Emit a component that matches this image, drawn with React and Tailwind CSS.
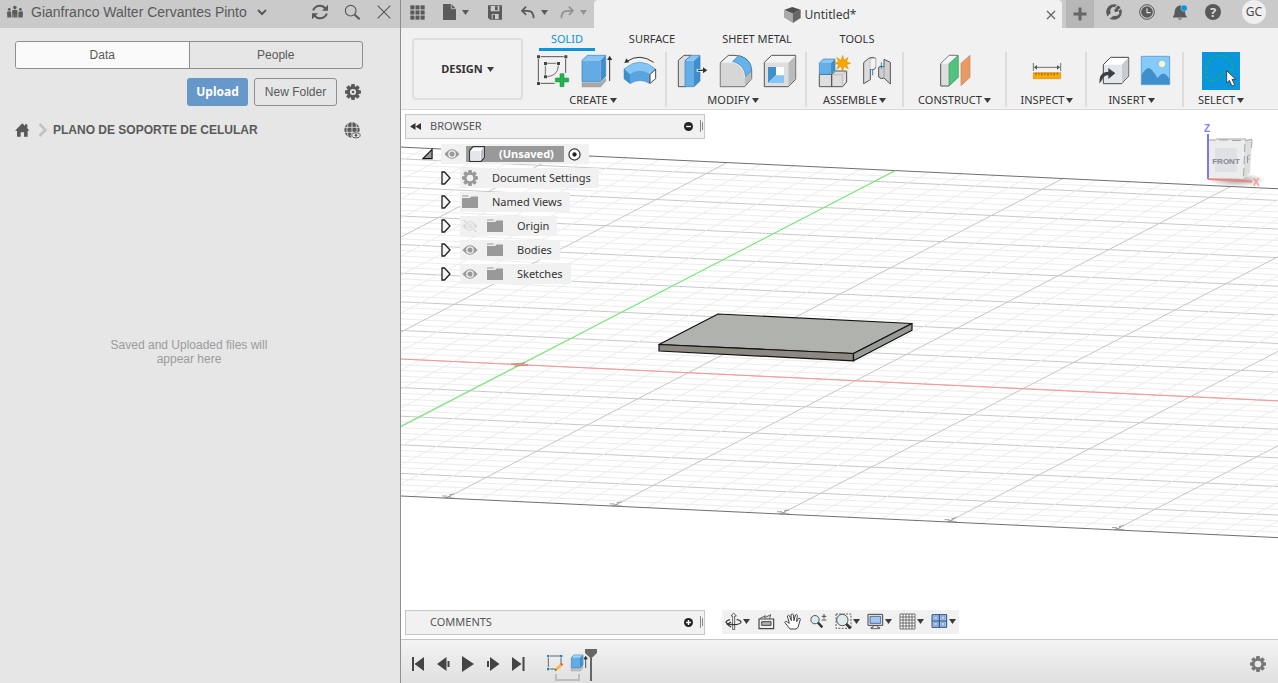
import React from "react";

const range = (from, to) => Array.from({ length: to - from + 1 }, (_, i) => from + i);

/* ---------- small shared pieces ---------- */

function Caret({ className = "text-[#3c3c3c]" }) {
  return (
    <svg width="7" height="5" viewBox="0 0 7 5" className={className} aria-hidden="true">
      <path d="M0 0h7L3.500 5z" fill="currentColor" />
    </svg>
  );
}

function Icon({ box, w, h, children, className = "" }) {
  return (
    <svg width={w} height={h} viewBox={box} className={"block shrink-0 " + className} aria-hidden="true">
      {children}
    </svg>
  );
}

function IconButton({ label, children, className = "" }) {
  return (
    <button type="button" aria-label={label} className={"flex items-center justify-center " + className}>
      {children}
    </button>
  );
}

function Gear({ size, teeth = 8, color, hole = 4, dot = false }) {
  return (
    <svg width={size} height={size} viewBox="-12 -12 24 24" className="block" aria-hidden="true">
      {range(0, teeth - 1).map((i) => (
        <path key={i} d="M-2.4 -12h4.8l.8 5h-6.4z" fill={color} transform={`rotate(${(360 / teeth) * i})`} />
      ))}
      <circle r={(8.6 + hole) / 2} fill="none" stroke={color} strokeWidth={8.6 - hole} />
      {dot && <circle r="2" fill={color} />}
    </svg>
  );
}

/* ---------- data panel ---------- */

function DataPanel() {
  return (
    <aside className="flex w-[401px] shrink-0 flex-col border-r border-[#8f8f8f] bg-[#e6e6e6] font-['Liberation_Sans',Arial,sans-serif] text-[#595959]">
      <header className="flex h-7 items-center bg-[#cacaca] pl-[7px] pr-2 pb-1">
        <button type="button" className="flex items-center">
          <Icon box="21 13 49 42" w={16} h={14}>
            <g fill="#5c5c5c">
              <circle cx="45" cy="20" r="5.5" />
              <circle cx="28" cy="26" r="4.5" />
              <circle cx="62" cy="26" r="4.5" />
              <path d="M37 29q8-4 16 0v22h-4v-9h-1v9h-6v-9h-1v9h-4z" />
              <path d="M21 33q7-3 13 0v18H22z M56 33q7-3 14 0l-1 18H56z" />
            </g>
          </Icon>
          <span className="ml-2 text-[14px] leading-5">Gianfranco Walter Cervantes Pinto</span>
          <Icon box="0 0 10 7" w={10} h={7} className="ml-[10px]">
            <path d="M1 1l4 4 4-4" fill="none" stroke="#595959" strokeWidth="2" />
          </Icon>
        </button>
        <div className="ml-auto flex items-center gap-[15px]">
          <IconButton label="Refresh">
            <Icon box="933 12 54 48" w={18} h={16}>
              <g fill="none" stroke="#595959" strokeWidth="6">
                <path d="M939 31q7-14 21-14 10 0 17 9" />
                <path d="M981 41q-7 14-21 14-10 0-17-9" />
              </g>
              <path d="M984 14v18h-18z M936 58V40h18z" fill="#595959" />
            </Icon>
          </IconButton>
          <IconButton label="Search">
            <Icon box="1029 10 51 51" w={17} h={17}>
              <circle cx="1049" cy="30" r="16" fill="none" stroke="#595959" strokeWidth="3.5" />
              <path d="M1061 42l15 14" stroke="#595959" strokeWidth="6" />
            </Icon>
          </IconButton>
          <IconButton label="Close data panel">
            <Icon box="0 0 14 14" w={16} h={16}>
              <path d="M1.5 1.5l11 11M12.5 1.5l-11 11" stroke="#595959" strokeWidth="1" />
            </Icon>
          </IconButton>
        </div>
      </header>

      <div className="flex flex-col pl-[15px] pr-[37px] pt-[13px]">
        <div className="flex h-7 overflow-hidden rounded-[3px] border border-[#8f8f8f] text-[12px]">
          <button type="button" className="flex-1 border-r border-[#8f8f8f] bg-[#fafafa]">Data</button>
          <button type="button" className="flex-1">People</button>
        </div>
        <div className="mt-[9px] flex h-7 items-center justify-end pr-0.5">
          <button type="button" className="h-7 w-[61px] rounded-[3px] bg-[#6699c9] font-['Noto_Sans',sans-serif] text-[12px] font-bold text-white">
            Upload
          </button>
          <button type="button" className="ml-1.5 h-7 w-[83px] rounded-[3px] border border-[#8f8f8f] text-[12px]">
            New Folder
          </button>
          <IconButton label="Settings" className="ml-2">
            <Gear size={16} color="#595959" hole={4.6} dot />
          </IconButton>
        </div>
        <nav className="mt-[10px] flex h-7 items-center pr-0.5">
          <IconButton label="Home">
            <Icon box="47 370 45 42" w={15} h={14}>
              <path d="M69 371l8 8v-5h7v12l6 7h-5v18H74v-13H64v13H53v-18h-6z" fill="#595959" />
            </Icon>
          </IconButton>
          <Icon box="0 0 9 14" w={9} h={14} className="ml-2">
            <path d="M1.5 1l6 6-6 6" fill="none" stroke="#c2c2c2" strokeWidth="2.6" />
          </Icon>
          <a href="#project" className="ml-1.5 text-[12px] font-bold">PLANO DE SOPORTE DE CELULAR</a>
          <IconButton label="Open on the web" className="ml-auto">
            <Icon box="1033 365 51 51" w={17} h={17}>
              <circle cx="1057" cy="389" r="23" fill="#595959" />
              <path d="M1033 381h48M1033 396h48M1057 365v48M1046 366q-9 22 0 46M1068 366q9 22 0 46" fill="none" stroke="#e6e6e6" strokeWidth="2.5" />
              <ellipse cx="1069" cy="405" rx="16" ry="11" fill="#e6e6e6" />
              <ellipse cx="1069" cy="405" rx="12.5" ry="7.5" fill="none" stroke="#595959" strokeWidth="3" />
              <circle cx="1069" cy="405" r="4" fill="#595959" />
            </Icon>
          </IconButton>
        </nav>
      </div>
      <p className="ml-[15px] mt-[194px] w-[348px] px-[88px] text-center text-[12px] leading-[14px] text-[#9b9b9b]">
        Saved and Uploaded files will appear here
      </p>
    </aside>
  );
}

/* ---------- title bar ---------- */

function TitleBar() {
  return (
    <header className="flex h-7 shrink-0 bg-[#cacaca] text-[#5a5a5a]">
      <div className="flex w-[193px] items-center pb-1 pl-[9px]">
        <IconButton label="Show data panel">
          <Icon box="29 14 44 44" w={15} h={15}>
            {range(0, 8).map((i) => (
              <rect key={i} x={30 + (i % 3) * 15} y={15 + Math.floor(i / 3) * 15} width="12" height="12" fill="#5a5a5a" />
            ))}
          </Icon>
        </IconButton>
        <IconButton label="File" className="ml-[18px] gap-1.5">
          <Icon box="129 12 39 48" w={13} h={16}>
            <path d="M129 12h25l14 14v34h-39z" fill="#5a5a5a" />
            <path d="M154 12v14h14" fill="none" stroke="#cacaca" strokeWidth="2.5" />
          </Icon>
          <Caret className="text-[#5a5a5a]" />
        </IconButton>
        <IconButton label="Save" className="ml-[19px]">
          <Icon box="264 14 42 43" w={14} h={15}>
            <path d="M264 14h42v43h-36l-6-6z" fill="#5a5a5a" />
            <path d="M272 16h26v16h-26z M275 40h21v15h-21z" fill="#cacaca" />
            <path d="M285 17h8v12h-8z M278 42h7v13h-7z" fill="#5a5a5a" />
          </Icon>
        </IconButton>
        <IconButton label="Undo" className="ml-[19px] gap-1.5">
          <Icon box="363 18 41 38" w={14} h={13}>
            <path d="M378 20l-12 12 12 12M367 32h16q17 0 17 22" fill="none" stroke="#5a5a5a" strokeWidth="5" />
          </Icon>
          <Caret className="text-[#5a5a5a]" />
        </IconButton>
        <IconButton label="Redo" className="ml-3 gap-1.5">
          <Icon box="363 18 41 38" w={14} h={13} className="-scale-x-100">
            <path d="M378 20l-12 12 12 12M367 32h16q17 0 17 22" fill="none" stroke="#939393" strokeWidth="5" />
          </Icon>
          <Caret className="text-[#939393]" />
        </IconButton>
      </div>

      <div className="flex flex-1 items-center rounded-t-[4px] bg-[#f1f1f1] pr-1.5 pt-px">
        <div className="flex flex-1 items-center justify-center gap-1">
          <Icon box="374 18 50 47" w={17} h={16}>
            <path d="M374 28l26 9v28l-26-16z" fill="#a9a9a9" />
            <path d="M423 26l-23 11v28l23-15z" fill="#666" />
            <path d="M374 27l24-9 25 8-23 11z" fill="#4f4f4f" />
          </Icon>
          <span className="text-[12px] leading-4 text-[#3c3c3c]">Untitled*</span>
        </div>
        <IconButton label="Close tab">
          <Icon box="0 0 10 10" w={10} h={10}>
            <path d="M1 1l8 8M9 1L1 9" stroke="#666" strokeWidth="1.3" />
          </Icon>
        </IconButton>
      </div>

      <div className="flex items-center pr-3">
        <IconButton label="New tab" className="ml-1 h-7 w-7 bg-[#b7b7b7]">
          <Icon box="0 0 14 14" w={14} h={14}>
            <path d="M7 .5v13M.5 7h13" stroke="#666" strokeWidth="3" />
          </Icon>
        </IconButton>
        <div className="ml-3 flex items-center gap-[17px] pb-1">
          <IconButton label="Extensions">
            <Icon box="438 12 48 48" w={16} h={16}>
              <circle cx="462" cy="36" r="23.5" fill="#595959" />
              <path d="M441 51l11-12q-5-13 8-19l9 3-7 8 4 6 11-4 1 8q-6 9-17 6l-12 9z" fill="#cacaca" />
              <path d="M466 22l7-7M475 31l8-6" stroke="#cacaca" strokeWidth="3.500" />
            </Icon>
          </IconButton>
          <IconButton label="Job status">
            <Icon box="537 12 48 48" w={16} h={16}>
              <circle cx="561" cy="36" r="22" fill="#cacaca" stroke="#595959" strokeWidth="3" />
              <circle cx="561" cy="36" r="17.5" fill="#595959" />
              <path d="M561 25v13h11" fill="none" stroke="#dedede" strokeWidth="3.5" />
            </Icon>
          </IconButton>
          <IconButton label="Notifications">
            <Icon box="637 10 48 50" w={16} h={17}>
              <path d="M658 15q3-4 6 0 11 4 12 18 0 10 5 14v3h-41v-3q5-4 5-14 1-14 13-18z" fill="#595959" />
              <path d="M654 53h13q-6 8-13 0z" fill="#595959" />
              <circle cx="673" cy="22" r="9.5" fill="#0a95dc" stroke="#cacaca" strokeWidth="1.5" />
            </Icon>
          </IconButton>
          <IconButton label="Help" className="size-4 rounded-full bg-[#595959] text-[13px] font-bold leading-4 text-[#dcdcdc]">
            ?
          </IconButton>
          <button type="button" className="ml-1 size-6 rounded-full bg-[#efefef] text-[12px] leading-6 text-[#4a4a4a]">
            GC
          </button>
        </div>
      </div>
    </header>
  );
}

/* ---------- ribbon ---------- */

const sketchIcon = (
  <Icon key="sketch" box="414 159 102 108" w={34} h={36}>
    <path d="M425 170h69M425 250h42M418 177v67M500 177v42" stroke="#555" strokeWidth="3" fill="none" />
    <path d="M439 197v27M445 190h27M478 197q-1 30-33 33" stroke="#555" strokeWidth="2.5" fill="none" />
    <g fill="#444">
      <path d="M414 166h9v9h-9z M496 166h9v9h-9z M414 246h9v9h-9z M435 186h9v9h-9z M474 186h9v9h-9z M435 226h9v9h-9z" />
    </g>
    <path d="M483 221h12v13h14v12h-14v14h-12v-14h-14v-12h14z" fill="#25b14f" stroke="#17913d" strokeWidth="1.5" />
  </Icon>
);

const extrudeIcon = (
  <Icon key="extrude" box="543 159 96 108" w={32} h={36}>
    <path d="M546 248h56l15-14v10l-15 17h-56z" fill="#a8a8a8" stroke="#8c8c8c" />
    <path d="M546 181h56v64h-56z" fill="#62abe4" />
    <path d="M546 181l16-15h55l-15 15z" fill="#84c6f7" />
    <path d="M602 181l15-15v63l-15 16z" fill="#3f8fcb" />
    <path d="M546 181l16-15h55v63l-15 16h-56z" fill="none" stroke="#3580b8" strokeWidth="2" />
    <path d="M629 243v-66" stroke="#333" strokeWidth="3" />
    <path d="M621 180l8-13 8 13z" fill="#333" />
  </Icon>
);

const revolveIcon = (
  <Icon key="revolve" box="669 159 102 108" w={34} h={36}>
    <path d="M672 207q47-41 95 0l-17 17q-31-21-60 0z" fill="#84c6f7" />
    <path d="M672 207l18 17v27l-18-15z" fill="#3f8fcb" />
    <path d="M690 224q29-21 60 0v27q-30-19-60 0z" fill="#5aa5e0" />
    <path d="M672 207q47-41 95 0l-17 17q-31-21-60 0zM672 207v29l18 15q30-19 60 0" fill="none" stroke="#3580b8" strokeWidth="1.5" />
    <path d="M750 224l17-17v29l-17 14z" fill="#fff" stroke="#444" strokeWidth="3" />
    <path d="M681 184q38-26 80 3" fill="none" stroke="#333" strokeWidth="3" />
    <path d="M673 189l6-14 9 12z" fill="#333" />
  </Icon>
);

const pressPullIcon = (
  <Icon key="press pull" box="54 159 96 108" w={32} h={36}>
    <path d="M58 181l17-15h22l-17 15v79H58z" fill="#ddd" stroke="#555" strokeWidth="3" strokeLinejoin="round" />
    <path d="M78 182h27v78H78z" fill="#66aee6" />
    <path d="M78 182l18-16h27l-18 16z" fill="#84c6f7" />
    <path d="M105 182l18-16v77l-18 17z" fill="#3f8fcb" />
    <path d="M78 182l18-16h27v77l-18 17H78z" fill="none" stroke="#3580b8" strokeWidth="2" />
    <path d="M113 211h24" stroke="#fff" strokeWidth="8" />
    <path d="M116 211h20" stroke="#333" strokeWidth="4" />
    <path d="M132 202l13 9-13 9z" fill="#333" />
  </Icon>
);

const filletIcon = (
  <Icon key="fillet" box="180 159 102 108" w={34} h={36}>
    <path d="M184 188l24-22h17q48 0 53 45v25l-21 24h-73z" fill="#f2f2f2" stroke="#555" strokeWidth="3" strokeLinejoin="round" />
    <path d="M185 188h37q33 10 35 45v26h-72z" fill="#d6d6d6" />
    <path d="M257 233l20-22v25l-20 23z" fill="#bcbcbc" />
    <path d="M221 184l18-17q38 9 39 44l-18 19q-3-36-39-46z" fill="#66b2ea" stroke="#3580b8" strokeWidth="2" />
  </Icon>
);

const shellIcon = (
  <Icon key="shell" box="309 159 102 108" w={34} h={36}>
    <path d="M313 187l22-21h72v72l-22 22h-72z" fill="#f4f4f4" stroke="#555" strokeWidth="3" strokeLinejoin="round" />
    <path d="M315 188h69v70h-69z" fill="#dedede" />
    <path d="M385 188l21-20v70l-21 21z" fill="#bbb" />
    <path d="M324 201h48v48h-48z" fill="#fff" />
    <path d="M324 201h24v25l-24 23z" fill="#3f8fcb" />
    <path d="M348 226l-24 23h48v-23z" fill="#84c6f7" />
  </Icon>
);

const componentIcon = (
  <Icon key="component" box="471 159 102 108" w={34} h={36}>
    <path d="M475 223h37v37h-37z M512 223l12-10h33v33l-12 14h-33z" fill="#dedede" stroke="#555" strokeWidth="3" strokeLinejoin="round" />
    <path d="M513 224h31v35M545 223l12-10" fill="none" stroke="#aaa" strokeWidth="2" />
    <path d="M475 189h35v34h-35z" fill="#66aee6" />
    <path d="M475 189l12-12h35l-12 12z" fill="#84c6f7" />
    <path d="M510 189l12-12v34l-12 12z" fill="#3f8fcb" />
    <path d="M475 189l12-12h35v34l-12 12h-35z" fill="none" stroke="#3580b8" strokeWidth="2" />
    <path d="M545 166l4 15 12-9-4 13 12 5-12 4 5 13-13-8-4 15-5-15-13 9 6-14-13-4 13-5-6-13 13 9z" fill="#f7a600" stroke="#dd8a00" strokeWidth="1.5" />
  </Icon>
);

const jointIcon = (
  <Icon key="joint" box="606 159 90 108" w={30} h={36}>
    <path d="M611 188l15-13q10-6 21 0v26q0 10-16 6v32l-20 12z" fill="#dcdcdc" stroke="#555" strokeWidth="3" strokeLinejoin="round" />
    <path d="M631 207v-27l16-5" fill="none" stroke="#777" strokeWidth="2" />
    <path d="M631 180q8-5 16-4v25q-6 8-16 6z" fill="#f4f4f4" />
    <path d="M691 187l-19-9v23q-10-5-16 1v29q7 8 16 3l19 18z" fill="#cfcfcf" stroke="#555" strokeWidth="3" strokeLinejoin="round" />
    <path d="M672 201v31" stroke="#888" strokeWidth="2" />
    <path d="M638 208v18M664 187v19" stroke="#1a86d8" strokeWidth="3" />
  </Icon>
);

const planeIcon = (
  <Icon key="plane" box="840 159 96 108" w={32} h={36}>
    <path d="M845 191l26-25h24v67l-25 25h-25z" fill="#ddd" stroke="#555" strokeWidth="3" strokeLinejoin="round" />
    <path d="M846 191l25-24h23l-24 24z" fill="#f6f6f6" />
    <path d="M870 191l28-25v66l-28 26z" fill="#53c27f" stroke="#2ca35c" strokeWidth="2" />
    <path d="M906 190l27-24v66l-27 25z" fill="#e99b66" stroke="#d07f48" strokeWidth="2" />
  </Icon>
);

const measureIcon = (
  <Icon key="measure" box="216 159 90 108" w={30} h={36}>
    <path d="M220 189v24M302 189v24M224 202h74" stroke="#555" strokeWidth="2.5" />
    <path d="M222 202l9-7v14z M300 202l-9-7v14z" fill="#555" />
    <path d="M220 218h82v18h-82z" fill="#f9a90c" stroke="#d98c00" strokeWidth="2" />
    <path d="M228 219v7M237 219v5M246 219v7M255 219v5M264 219v7M273 219v5M282 219v7M292 219v5" stroke="#6b4a00" strokeWidth="2.5" />
  </Icon>
);

const insertIcon = (
  <Icon key="derive" box="414 159 96 108" w={32} h={36}>
    <path d="M430 194l22-22h54v56l-21 23h-55z" fill="#fff" stroke="#444" strokeWidth="3" strokeLinejoin="round" />
    <path d="M432 194h52v55h-52z" fill="#e3e6ea" />
    <path d="M485 194l20-21v55l-20 22z" fill="#c6cbd2" />
    <path d="M419 236q4-21 26-21v-11l21 16-21 17v-11q-13-1-19 14l-8 11z" fill="#3c3f44" />
  </Icon>
);

const decalIcon = (
  <Icon key="decal" box="543 159 93 108" w={31} h={36}>
    <path d="M547 169h85v85h-85z" fill="#84cbfb" stroke="#3b8ccb" strokeWidth="2" />
    <path d="M548 224q16-26 26-18 8 6 22 28 10-14 18-13 7 0 17 15v17h-83z" fill="#3f8fcb" />
    <circle cx="609" cy="192" r="9" fill="#fff7c8" stroke="#ffeea0" />
  </Icon>
);

const selectIcon = (
  <Icon key="lasso" box="726 156 114 114" w={38} h={38}>
    <path d="M726 156h114v114H726z" fill="#0a95dc" />
    <path d="M745 190q12-25 40-23 32 4 33 34-2 18-18 19-14-2-22 6-6 14-20 16-18-1-20-22 0-16 7-30z" fill="none" stroke="#23b84d" strokeWidth="3.500" strokeDasharray="9 6" />
    <path d="M800 212v37l8-8 8 17 8-4-8-16h11z" fill="#fff" stroke="#333" strokeWidth="2.5" />
  </Icon>
);

const groups = [
  { name: "CREATE", width: "w-[138px]", shift: "pr-2", icons: [sketchIcon, extrudeIcon, revolveIcon] },
  { name: "MODIFY", width: "w-[140px] pl-0.5", shift: "pr-2", icons: [pressPullIcon, filletIcon, shellIcon] },
  { name: "ASSEMBLE", width: "w-[97px]", shift: "", icons: [componentIcon, jointIcon] },
  { name: "CONSTRUCT", width: "w-[103px]", shift: "", icons: [planeIcon] },
  { name: "INSPECT", width: "w-[80px] pl-0.5", shift: "", icons: [measureIcon] },
  { name: "INSERT", width: "w-[97px]", shift: "pr-1.5", icons: [insertIcon, decalIcon] },
  { name: "SELECT", width: "w-[74px]", shift: "", icons: [selectIcon] },
];

function Ribbon() {
  return (
    <div className="flex h-[82px] shrink-0 border-b border-[#d6d6d6] bg-[#f1f1f1] pl-[11px] text-[11px] text-[#333]">
      <button type="button" className="mr-1.5 mt-[10px] flex h-[62px] w-[111px] shrink-0 items-center justify-center gap-1 rounded-[4px] border-2 border-[#dedede] font-bold">
        DESIGN <Caret />
      </button>
      <div className="flex flex-col">
        <div className="mb-px flex h-[23px] gap-7 pl-[10px]">
          <button type="button" className="w-14 border-b-[3px] border-[#0a95dc] pt-0.5 text-[#0a95dc]">SOLID</button>
          <button type="button" className="w-[58px] pb-px">SURFACE</button>
          <button type="button" className="w-24 pb-px">SHEET METAL</button>
          <button type="button" className="w-12 pb-px">TOOLS</button>
        </div>
        <div className="flex">
          {groups.map((g, i) => (
            <div
              key={g.name}
              className={
                "flex h-[55px] shrink-0 flex-col items-center " +
                g.width +
                (i < groups.length - 1 ? " border-r-2 border-[#dcdcdc]" : "")
              }
            >
              <div className="flex h-[38px] shrink-0 items-center gap-[10px]">
                {g.icons.map((ic) => (
                  <IconButton key={ic.key} label={g.name + " " + ic.key}>{ic}</IconButton>
                ))}
              </div>
              <button type="button" className={"mt-[3px] flex shrink-0 items-center gap-0.5 leading-[14px] " + g.shift}>
                {g.name} <Caret />
              </button>
            </div>
          ))}
        </div>
      </div>
    </div>
  );
}

/* ---------- canvas scene ---------- */

const topY = (x) => 147.1 + 0.0475 * (x - 401);
const bottomY = (x) => 496 + 0.0475 * (x - 401);

function Scene() {
  return (
    <svg className="absolute inset-0 h-full w-full" aria-hidden="true">
      <g transform="translate(-401 -110)" fill="none">
        {range(-36, 23).map((i) => {
          const y = 359 + i * 5.72;
          return <path key={"h" + i} d={`M401 ${y}L2401 ${y + 95}`} stroke={i % 5 ? "#ececec" : "#c8c8c8"} />;
        })}
        {range(-15, 60).map((j) => {
          const b = 279 + 33.44 * j;
          const t = 895 + 33.56 * j;
          return <path key={"d" + j} d={`M${b} ${bottomY(b)}L${t} ${topY(t)}`} stroke={j % 5 ? "#ececec" : "#c6c6c6"} />;
        })}
        <path d="M401 147.1L2401 242.1M401 496L2401 591" stroke="#6f6f6f" />
        <path d="M401 359L2401 454.8" stroke="#ff9494" />
        <path d="M401 426L895.4 170.7" stroke="#66f566" />
        <path d="M511 364l14-1M514 366l14-1" stroke="#c06060" strokeWidth="0.8" />
        {range(0, 4).map((k) => (
          <path key={k} d="M0 0l7-2M2 0h8M-2 -2h5M5 -3l5-1" stroke="#888" strokeWidth="0.8" transform={`translate(${444 + 167.5 * k} ${498 + 7.9 * k})`} />
        ))}
        <g stroke="#111" strokeWidth="1.2" strokeLinejoin="round">
          <path d="M659 344.5L718 314l194 9.500-58.500 30z" fill="#b0b3ad" />
          <path d="M659 344.500l194.500 9v7.300L659 351z" fill="#8d8882" />
          <path d="M853.500 353.500l58.500-30v6.800l-58.500 30.500z" fill="#989b95" />
        </g>
      </g>
    </svg>
  );
}

function ViewCube() {
  return (
    <svg width="66" height="74" viewBox="0 0 66 74" className="absolute right-1.5 top-2.5 overflow-visible font-['Liberation_Sans',Arial,sans-serif]" aria-label="View cube">
      <defs>
        <radialGradient id="shade">
          <stop offset="0" stopColor="#555" stopOpacity=".55" />
          <stop offset="1" stopColor="#555" stopOpacity="0" />
        </radialGradient>
      </defs>
      <ellipse cx="31" cy="60" rx="29" ry="7" fill="url(#shade)" />
      <path d="M3 20l7-1h36l-7 2-2 38L3 57z" fill="#ececec" />
      <path d="M39 21l7-2-2 34-7 6z" fill="#dddee0" />
      <path d="M9 28h22v24H9z" fill="#dfe1e4" />
      <path d="M3 20h7M13 20h9M26 20.500h9M10 19h30M39 21l7-2M39 24l-.5 8M38.500 36l-.5 8M38 48l-.5 8M46 20l-.5 8" stroke="#a6a6a6" strokeWidth="1" />
      <text x="20" y="44" textAnchor="middle" fontSize="8" fontWeight="bold" fill="#85898e">
        FRONT
      </text>
      <path d="M41.500 36v7M41.500 36l2-.5M41.500 39h2" stroke="#95999e" strokeWidth="1" />
      <path d="M2 14v45" stroke="#7a7af0" strokeWidth="2" />
      <path d="M2 59l44 2.500" stroke="#ee8484" strokeWidth="2" />
      <text x="-2" y="12" fontSize="10" fontWeight="bold" fill="#8484f2">Z</text>
      <text x="47" y="66" fontSize="10" fontWeight="bold" fill="#f39a9a">X</text>
    </svg>
  );
}

/* ---------- browser tree ---------- */

function Eye({ hidden }) {
  const color = hidden ? "#d9d9d9" : "#999";
  return (
    <Icon box="0 0 16 12" w={16} h={12}>
      <path d="M.5 6Q8-3.500 15.500 6 8 15.500 .5 6z" fill={color} />
      <circle cx="8" cy="6" r="3.200" fill="none" stroke="#f1f1f1" strokeWidth="1.300" />
      {hidden && <path d="M1 0l14 12" stroke="#f1f1f1" strokeWidth="3" />}
      {hidden && <path d="M1.500 0l13 12" stroke={color} strokeWidth="1.400" />}
    </Icon>
  );
}

function Folder() {
  return (
    <Icon box="0 0 16 14" w={16} h={14}>
      <path d="M0 .5h6l1 1H0zM0 3h8l1.500-1.500H16V13H0z" fill="#999" />
    </Icon>
  );
}

function Expander() {
  return (
    <IconButton label="Expand" className="mr-2.5 w-[9px]">
      <Icon box="0 0 10 14" w={10} h={14}>
        <path d="M1 1h2.500L9 7l-5.500 6H1z" fill="#f4f4f4" stroke="#222" strokeWidth="1.300" />
      </Icon>
    </IconButton>
  );
}

const rows = [
  { text: "Document Settings", kind: "gear" },
  { text: "Named Views", kind: "folder" },
  { text: "Origin", kind: "folder", eye: "off" },
  { text: "Bodies", kind: "folder", eye: "on" },
  { text: "Sketches", kind: "folder", eye: "on" },
];

function PanelBar({ title, collapse, sign }) {
  return (
    <div className="flex h-[25px] w-[300px] items-center border border-[#c6c6c6] bg-[#f1f1f1] pb-px pl-1 text-[11px] leading-4 text-[#555]">
      <div className="w-5">
        {collapse && (
          <IconButton label="Collapse browser">
            <Icon box="0 0 11 7" w={11} h={7}>
              <path d="M5.500 0v7L0 3.500zM11 0v7L5.500 3.500z" fill="#333" />
            </Icon>
          </IconButton>
        )}
      </div>
      <h2>{title}</h2>
      <IconButton label={sign === "+" ? "Open comments" : "Minimise browser"} className="ml-auto">
        <Icon box="0 0 10 10" w={9} h={9}>
          <circle cx="5" cy="5" r="5" fill="#222" />
          <path d={sign === "+" ? "M2.300 5h5.400M5 2.300v5.400" : "M2.300 5h5.400"} stroke="#fff" strokeWidth="1.500" />
        </Icon>
      </IconButton>
      <Icon box="0 0 3 12" w={3} h={12} className="ml-[7px] mr-px">
        <path d="M.5 0v12M2.500 2v8" stroke="#888" />
      </Icon>
    </div>
  );
}

function BrowserTree() {
  return (
    <div className="flex flex-col items-start gap-1 pt-[5px] text-[11px] leading-5 text-[#333]">
      <div className="flex items-center pl-[17px]">
        <IconButton label="Collapse" className="mr-2">
          <Icon box="0 0 12 12" w={11} h={12}>
            <path d="M11 1v10H1z" fill="#999" stroke="#111" strokeWidth="1.200" />
          </Icon>
        </IconButton>
        <div className="flex h-5 items-center bg-[#f1f1f1] pl-[3px] pr-2">
          <IconButton label="Toggle visibility"><Eye /></IconButton>
          <div className="ml-1.5 flex h-4 w-[98px] items-center bg-[#999] pl-[3px] font-bold text-white">
            <Icon box="0 0 16 16" w={16} h={16}>
              <path d="M.7 4.500L4 .7h11.300v10.800L12 15.300H.7z" fill="#fff" stroke="#333" strokeWidth="1.200" />
              <path d="M1.300 5H11.500v9.700H1.300z" fill="#e4e6ea" />
              <path d="M12 5l2.700-3.300v9.500L12 14.500z" fill="#b9bec6" />
            </Icon>
            <span className="ml-3.5">(Unsaved)</span>
          </div>
          <IconButton label="Activate component" className="ml-1">
            <Icon box="0 0 14 14" w={13} h={13}>
              <circle cx="7" cy="7" r="6" fill="#fff" stroke="#333" strokeWidth="1.300" />
              <circle cx="7" cy="7" r="2.300" fill="#222" />
            </Icon>
          </IconButton>
        </div>
      </div>
      {rows.map((r) => (
        <div key={r.text} className="flex items-center pl-9">
          <Expander />
          <div className="flex h-5 items-center bg-[#f1f1f1] pl-0.5 pr-2">
            {r.eye && (
              <IconButton label="Toggle visibility" className="mr-[9px]">
                <Eye hidden={r.eye === "off"} />
              </IconButton>
            )}
            {r.kind === "gear" ? <Gear size={16} color="#999" hole={5} /> : <Folder />}
            <span className="ml-3.5">{r.text}</span>
          </div>
        </div>
      ))}
    </div>
  );
}

/* ---------- navigation bar ---------- */

const navItems = [
  {
    label: "Orbit", caret: true, box: "74 38 51 51",
    art: (
      <>
        <path d="M97 88V47h-5l8-9 8 9h-5v41z" fill="#fff" stroke="#444" strokeWidth="2.5" />
        <path d="M89 58q-13 4-12 8 3 7 24 7 19-1 21-7 0-6-13-8M92 65l-11 7 11 8" fill="none" stroke="#333" strokeWidth="3.5" />
      </>
    ),
  },
  {
    label: "Look at", box: "173 38 51 51",
    art: (
      <>
        <path d="M178 55l17-9-2 6 18-9-3 12" fill="#ddd" stroke="#444" strokeWidth="2.5" />
        <path d="M176 56h44v29h-44z" fill="#eee" stroke="#444" strokeWidth="3.5" />
        <path d="M184 64h28v11h-28z" fill="#a9b0b8" stroke="#444" strokeWidth="3" />
      </>
    ),
  },
  {
    label: "Pan", box: "252 38 51 51",
    art: (
      <path d="M270 86l-16-20q2-6 8-1l6 4-6-22q4-5 7 0l5 14-1-18q4-4 7 0l2 18 4-17q5-3 6 1l-2 19 6-10q5-1 5 3l-7 24-6 5z" fill="#fff" stroke="#444" strokeWidth="3" strokeLinejoin="round" />
    ),
  },
  {
    label: "Zoom", box: "329 38 51 51",
    art: (
      <>
        <circle cx="344" cy="58" r="12.500" fill="#dcebf0" stroke="#555" strokeWidth="3" />
        <path d="M353 67l13 14" stroke="#333" strokeWidth="7" />
        <path d="M364 48h14M371 41v14M364 59h14" stroke="#333" strokeWidth="2.5" />
      </>
    ),
  },
  {
    label: "Fit", caret: true, box: "406 38 51 51",
    art: (
      <>
        <path d="M409 41h45v43h-45z" fill="none" stroke="#444" strokeWidth="2.5" strokeDasharray="6 4" />
        <circle cx="428" cy="59" r="17" fill="#dcebf0" stroke="#555" strokeWidth="3" />
        <path d="M440 71l13 13" stroke="#333" strokeWidth="8" />
      </>
    ),
  },
  {
    label: "Display settings", caret: true, box: "506 38 51 51",
    art: (
      <>
        <path d="M509 42h44v33h-44z" fill="#eee" stroke="#444" strokeWidth="3" />
        <path d="M515 48h32v21h-32z" fill="#a3c4ec" stroke="#345a96" strokeWidth="2.5" />
        <path d="M524 76h14v5h6v4h-26v-4h6z" fill="#eee" stroke="#444" strokeWidth="2.5" />
      </>
    ),
  },
  {
    label: "Grid and snaps", caret: true, box: "598 38 51 51",
    art: (
      <>
        <path d="M601 41h45v45h-45z" fill="#fff" />
        <path d="M601 41h45v45h-45zM610 41v45M619 41v45M628 41v45M637 41v45M601 50h45M601 59h45M601 68h45M601 77h45" fill="none" stroke="#555" strokeWidth="2.5" />
      </>
    ),
  },
  {
    label: "Viewports", caret: true, box: "691 38 51 51",
    art: (
      <>
        <path d="M694 43h44v38h-44z" fill="#a3c4ec" stroke="#2e4c85" strokeWidth="3" />
        <path d="M716 43v38M694 62h44" stroke="#2e4c85" strokeWidth="3.5" />
        <path d="M700 48h10v8h-10zM722 48h10v8h-10zM700 67h10v8h-10zM722 67h10v8h-10z" fill="#c9dcf4" stroke="#5578b5" strokeWidth="1.500" />
      </>
    ),
  },
];

function NavBar() {
  return (
    <div className="flex h-6 items-center gap-[7px] bg-[#f1f1f1] px-[3px] pb-0.5">
      {navItems.map((n) => (
        <IconButton key={n.label} label={n.label} className={n.caret ? "gap-px" : "w-[19px]"}>
          <Icon box={n.box} w={17} h={17}>{n.art}</Icon>
          {n.caret && <Caret />}
        </IconButton>
      ))}
    </div>
  );
}

/* ---------- timeline ---------- */

const transport = [
  ["Go to start", "M0 0h2v14H0zM12 0v14L2.500 7z"],
  ["Step back", "M9.500 0v14L0 7zM10.500 4h2v6h-2z"],
  ["Play", "M0 -1l12 8-12 8z"],
  ["Step forward", "M3 0v14l9.500-7zM0 4h2v6H0z"],
  ["Go to end", "M0 0v14L9.500 7zM10.500 0h2v14h-2z"],
];

function Timeline() {
  return (
    <footer className="flex h-11 shrink-0 items-center border-t border-[#c6c6c6] bg-linear-to-b from-[#f3f3f3] to-[#e0e0e0] pl-[11px] pr-3 pt-1">
      <div className="flex gap-[12px]">
        {transport.map(([label, d]) => (
          <IconButton key={label} label={label}>
            <Icon box="0 -1 13 16" w={13} h={16}>
              <path d={d} fill="#444" />
            </Icon>
          </IconButton>
        ))}
      </div>
      <svg width="54" height="34" viewBox="438 144 162 102" className="ml-[21px] mt-0.5" role="img" aria-label="Timeline features">
        <path d="M450 168h30M445 174v28M450 207h16M483 174v15" stroke="#666" strokeWidth="3" fill="none" />
        <path d="M441 165h7v7h-7zM480 165h7v7h-7zM441 204h7v7h-7z" fill="#1286dc" />
        <path d="M464 212l4-9 13-12 6 6-13 12z" fill="#f9b63a" />
        <path d="M480 191l4-3 5 5-3 4z" fill="#e8403f" />
        <path d="M464 212l2-6 5 5z" fill="#444" />
        <path d="M513 207h27l9-8v5l-8 9h-28z" fill="#c8c8c8" stroke="#999" strokeWidth="1.5" />
        <path d="M514 173l8-8h27v30l-9 9h-26z" fill="#62abe4" stroke="#3580b8" strokeWidth="2" />
        <path d="M515 173l8-7h25l-8 7z" fill="#9bd2fa" />
        <path d="M540 174l8-8v29l-8 8z" fill="#3f8fcb" />
        <path d="M557 204v-31M552 177l5-8 5 8z" stroke="#333" strokeWidth="2.5" fill="#333" />
        <path d="M468 222v18h69v-18" fill="none" stroke="#bdbdbd" strokeWidth="6" />
        <path d="M555 147h36v12l-15 14h-6l-15-14z" fill="#666" />
        <path d="M573 170v73" stroke="#666" strokeWidth="6" />
      </svg>
      <IconButton label="Timeline settings" className="ml-auto">
        <Gear size={16} color="#777" hole={5} />
      </IconButton>
    </footer>
  );
}

export default function App() {
  return (
    <div className="flex min-h-screen bg-white">
      <DataPanel />
      <div className="flex min-w-0 flex-1 flex-col font-['Noto_Sans','Open_Sans',sans-serif]">
        <TitleBar />
        <Ribbon />
        <main className="relative flex flex-1 flex-col overflow-hidden bg-white">
          <Scene />
          <ViewCube />
          <div className="relative flex flex-1 flex-col justify-between pb-1 pl-1 pt-1">
            <section>
              <PanelBar title="BROWSER" collapse sign="-" />
              <BrowserTree />
            </section>
            <div className="flex items-start gap-[17px]">
              <PanelBar title="COMMENTS" sign="+" />
              <NavBar />
            </div>
          </div>
        </main>
        <Timeline />
      </div>
    </div>
  );
}
